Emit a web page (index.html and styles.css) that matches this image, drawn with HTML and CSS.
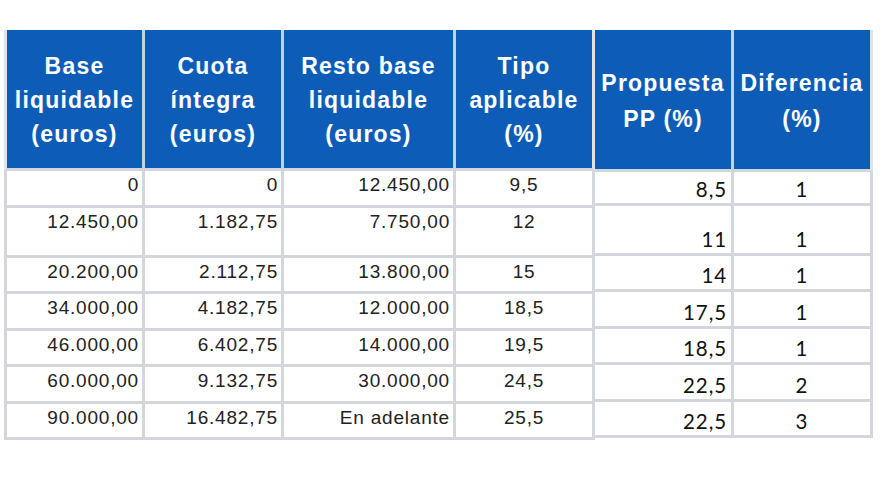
FILE: index.html
```html
<!DOCTYPE html>
<html lang="es">
<head>
<meta charset="utf-8">
<title>Tramos IRPF</title>
<link rel="stylesheet" href="styles.css">
</head>
<body>
<div class="page">
  <table class="tbl tbl-left">
    <thead>
      <tr class="hrow">
        <th class="c1">Base<br>liquidable<br>(euros)</th>
        <th class="c2">Cuota<br>íntegra<br>(euros)</th>
        <th class="c3">Resto base<br>liquidable<br>(euros)</th>
        <th class="c4">Tipo<br>aplicable<br>(%)</th>
      </tr>
    </thead>
    <tbody>
      <tr class="r1"><td class="num c1">0</td><td class="num c2">0</td><td class="num c3">12.450,00</td><td class="ctr c4">9,5</td></tr>
      <tr class="r2"><td class="num c1">12.450,00</td><td class="num c2">1.182,75</td><td class="num c3">7.750,00</td><td class="ctr c4">12</td></tr>
      <tr class="r3"><td class="num c1">20.200,00</td><td class="num c2">2.112,75</td><td class="num c3">13.800,00</td><td class="ctr c4">15</td></tr>
      <tr class="r4"><td class="num c1">34.000,00</td><td class="num c2">4.182,75</td><td class="num c3">12.000,00</td><td class="ctr c4">18,5</td></tr>
      <tr class="r5"><td class="num c1">46.000,00</td><td class="num c2">6.402,75</td><td class="num c3">14.000,00</td><td class="ctr c4">19,5</td></tr>
      <tr class="r6"><td class="num c1">60.000,00</td><td class="num c2">9.132,75</td><td class="num c3">30.000,00</td><td class="ctr c4">24,5</td></tr>
      <tr class="r7"><td class="num c1">90.000,00</td><td class="num c2">16.482,75</td><td class="num c3">En adelante</td><td class="ctr c4">25,5</td></tr>
    </tbody>
  </table>
  <table class="tbl tbl-right">
    <thead>
      <tr class="hrow">
        <th class="d1">Propuesta<br>PP (%)</th>
        <th class="d2">Diferencia<br>(%)</th>
      </tr>
    </thead>
    <tbody>
      <tr class="q1"><td class="num d1">8,5</td><td class="ctr d2">1</td></tr>
      <tr class="r2"><td class="num d1">11</td><td class="ctr d2">1</td></tr>
      <tr class="r3"><td class="num d1">14</td><td class="ctr d2">1</td></tr>
      <tr class="r4"><td class="num d1">17,5</td><td class="ctr d2">1</td></tr>
      <tr class="r5"><td class="num d1">18,5</td><td class="ctr d2">1</td></tr>
      <tr class="r6"><td class="num d1">22,5</td><td class="ctr d2">2</td></tr>
      <tr class="r7"><td class="num d1">22,5</td><td class="ctr d2">3</td></tr>
    </tbody>
  </table>
</div>
</body>
</html>
```
FILE: styles.css
```css
html, body {
  margin: 0;
  padding: 0;
  background: #ffffff;
}

.page {
  display: flex;
  align-items: flex-start;
  padding: 30px 0 0 4px;
}

.tbl {
  border-collapse: separate;
  border-spacing: 0;
  table-layout: fixed;
}

.tbl th,
.tbl td {
  box-sizing: content-box;
  padding: 0;
  border-right: 3px solid #d3d6dc;
  border-bottom: 3px solid #d3d6dc;
}

.tbl th {
  background: #0d5db8;
  color: #ffffff;
  font-family: "Liberation Sans", Arial, sans-serif;
  font-weight: bold;
  font-size: 23px;
  letter-spacing: 1.2px;
  text-align: center;
  vertical-align: middle;
  border-right-color: #c4d2e8;
  border-bottom-color: #d3d6dc;
}

.tbl-left th {
  height: 136px;
  line-height: 34px;
  padding-top: 2px;
}

.tbl-right th {
  height: 137px;
  line-height: 36px;
  padding-top: 2px;
}

.tbl-left td {
  font-family: "Liberation Sans", Arial, sans-serif;
  font-size: 19px;
  letter-spacing: 0.8px;
  color: #222222;
  line-height: 22px;
  vertical-align: top;
  padding-top: 3px;
}

.tbl-right td {
  font-family: Lato, "Noto Sans", sans-serif;
  font-size: 20.5px;
  letter-spacing: 0.9px;
  color: #111111;
  line-height: 22px;
  vertical-align: bottom;
  padding-bottom: 3px;
}

.tbl .c1 {
  border-left: 3px solid #d3d6dc;
  width: 135px;
}
.tbl th.c1 { border-left-color: #dfe5ee; }
.tbl .c2 { width: 136px; }
.tbl .c3 { width: 169px; }
.tbl .c4 { width: 136px; }
.tbl th.c4 { border-right-color: #dfe3ea; }

.tbl .d1 { width: 136px; }
.tbl .d2 { width: 136px; }
.tbl th.d2 { border-right-color: #dfe3ea; }

.num { text-align: right; }
.tbl-left td.num { padding-right: 3px; }
.tbl-left td.c1.num { width: 132px; }
.tbl-left td.c2.num { width: 133px; }
.tbl-left td.c3.num { width: 166px; }
.tbl-right td.num { padding-right: 4px; }
.tbl-right td.d1.num { width: 132px; }

.ctr { text-align: center; }

.tbl-left .r1 td { height: 31px; }
.tbl-left .r2 td { height: 44px; }
.tbl-left .r3 td { height: 30px; }
.tbl-left .r4 td { height: 31px; }
.tbl-left .r5 td { height: 30px; }
.tbl-left .r6 td { height: 31px; }
.tbl-left .r7 td { height: 30px; }

.tbl-right .q1 td { height: 28px; }
.tbl-right .r2 td { height: 44px; }
.tbl-right .r3 td { height: 30px; }
.tbl-right .r4 td { height: 31px; }
.tbl-right .r5 td { height: 30px; }
.tbl-right .r6 td { height: 31px; }
.tbl-right .r7 td { height: 30px; }
```
